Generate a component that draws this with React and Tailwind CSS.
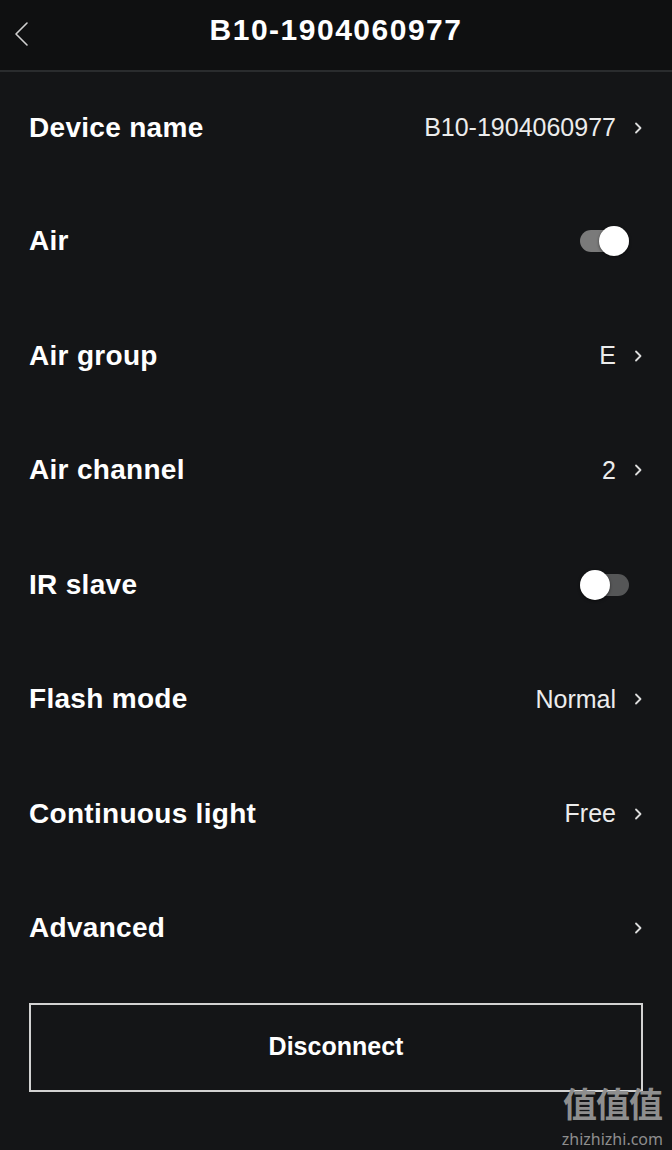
import React from 'react';

const rows = [
  { label: 'Device name', value: 'B10-1904060977', type: 'link' },
  { label: 'Air', type: 'toggle', on: true },
  { label: 'Air group', value: 'E', type: 'link' },
  { label: 'Air channel', value: '2', type: 'link' },
  { label: 'IR slave', type: 'toggle', on: false },
  { label: 'Flash mode', value: 'Normal', type: 'link' },
  { label: 'Continuous light', value: 'Free', type: 'link' },
  { label: 'Advanced', value: '', type: 'link' },
];

const Chevron = () => (
  <svg width="9" height="12" viewBox="0 0 9 12" className="ml-[18px] shrink-0">
    <path d="M2 1.5 L6.5 6 L2 10.5" fill="none" stroke="#dcdcdc" strokeWidth="1.8" strokeLinecap="round" strokeLinejoin="round" />
  </svg>
);

const Toggle = ({ on }) => (
  <div className="relative w-[49px] h-[22px] mr-[14px]">
    <div className={`absolute inset-0 rounded-full ${on ? 'bg-[#7a7a7a]' : 'bg-[#555657]'}`} />
    <div
      className={`absolute top-[-4px] w-[30px] h-[30px] rounded-full bg-white shadow-[0_1px_3px_rgba(0,0,0,0.5)] ${on ? 'right-0' : 'left-0'}`}
    />
  </div>
);

const App = () => {
  return (
    <div className="relative w-[672px] h-[1150px] bg-[#141517] text-white overflow-hidden font-['Liberation_Sans',Arial,sans-serif]">
      {/* Header */}
      <header className="relative flex items-center justify-center h-[72px] bg-[#0f1011] border-b-2 border-[#2a2c2e]">
        <svg width="16" height="26" viewBox="0 0 16 26" className="absolute left-[13px] top-[21px]">
          <path d="M14 2 L3 13 L14 24" fill="none" stroke="#d0d0d0" strokeWidth="1.6" strokeLinecap="round" strokeLinejoin="round" />
        </svg>
        <h1 className="text-[30px] font-bold tracking-[1.5px] leading-none mt-[-10px]">B10-1904060977</h1>
      </header>

      {/* Settings list */}
      <div className="flex flex-col">
        {rows.map((row, i) => (
          <div
            key={row.label}
            className={`flex items-center justify-between pl-[29px] pr-[29px] ${i === 0 ? 'h-[112px]' : 'h-[114.5px]'}`}
          >
            <span className="text-[28px] font-bold tracking-[0.3px]">{row.label}</span>
            {row.type === 'toggle' ? (
              <Toggle on={row.on} />
            ) : (
              <div className="flex items-center">
                {row.value && <span className="text-[25px] text-[#ececec]">{row.value}</span>}
                <Chevron />
              </div>
            )}
          </div>
        ))}
      </div>

      {/* Disconnect */}
      <div className="px-[29px] pt-[17px]">
        <button className="w-full h-[89px] border-2 border-[#d2d2d2] bg-[#141517] text-[25px] font-bold text-white">
          Disconnect
        </button>
      </div>

      {/* Watermark */}
      <div className="absolute right-[9px] bottom-0 flex flex-col items-center text-[#8e8e8e]">
        <span className="block h-[50px] text-[34px] font-bold leading-[50px] tracking-[-1px] font-['Noto_Sans_CJK_SC',sans-serif]">值值值</span>
        <span className="block h-[22px] text-[16px] leading-[22px] font-['Noto_Sans',sans-serif]">zhizhizhi.com</span>
      </div>
    </div>
  );
};

export default App;
